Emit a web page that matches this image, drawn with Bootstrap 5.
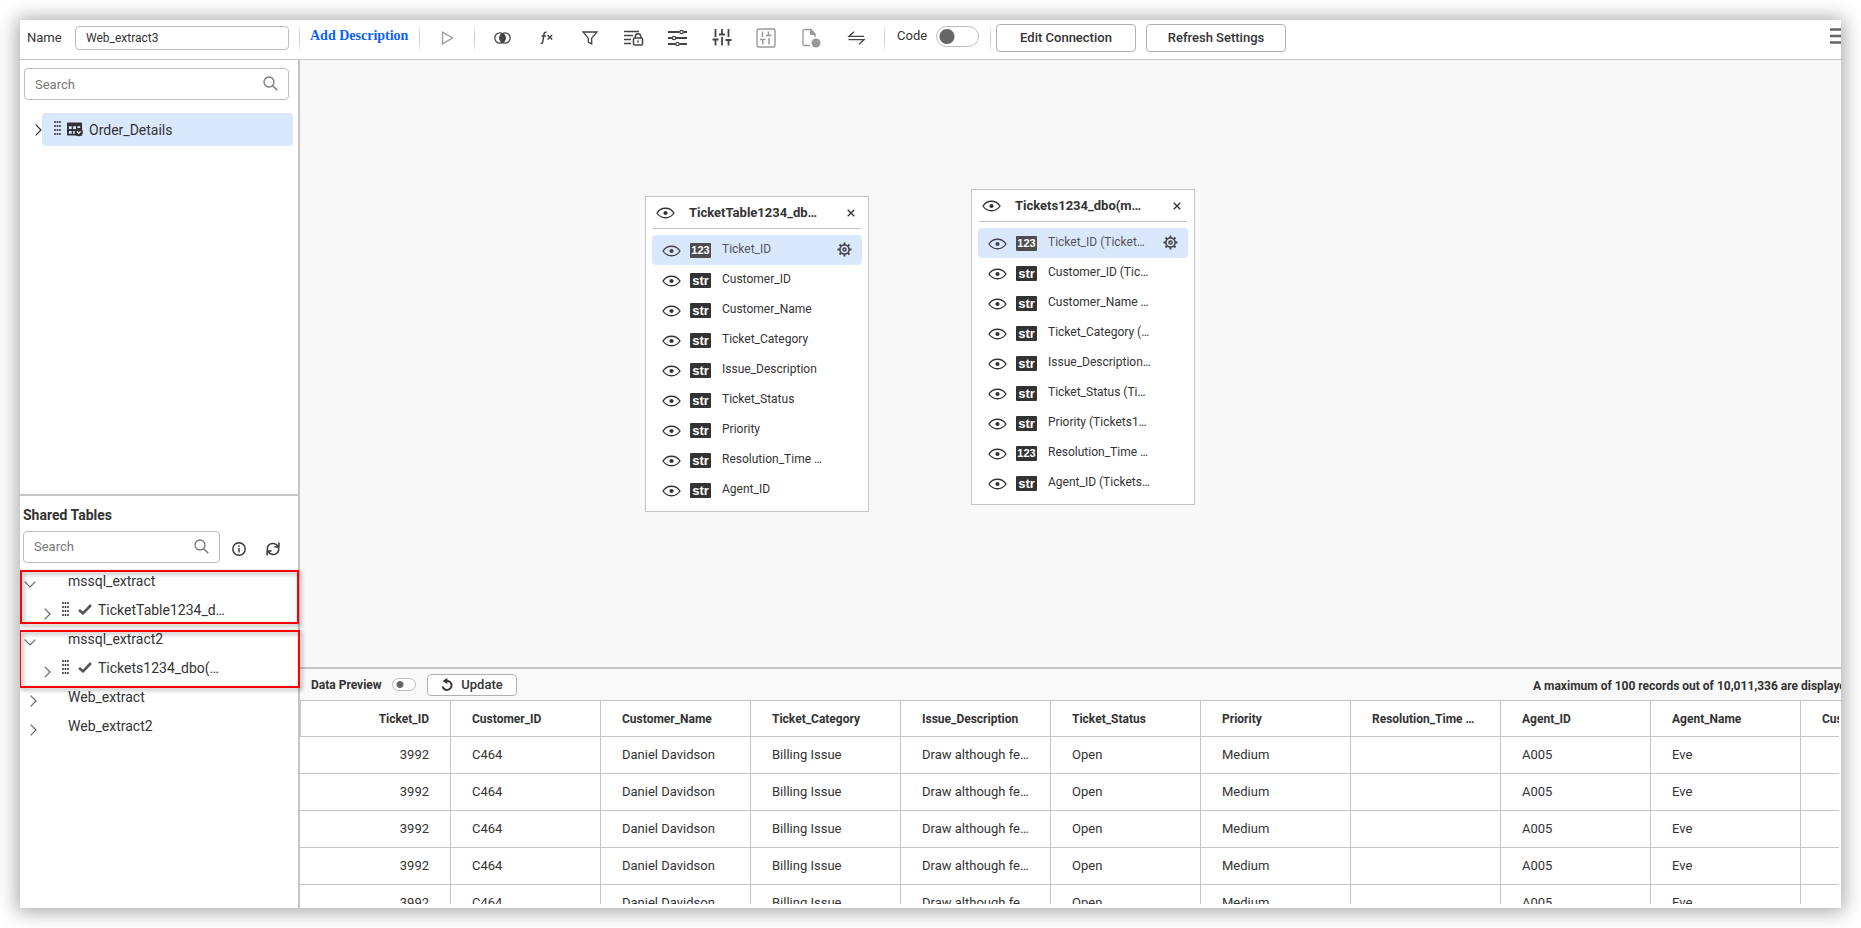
<!DOCTYPE html>
<html lang="en">
<head>
<meta charset="utf-8">
<meta name="viewport" content="width=device-width, initial-scale=1">
<title>Web_extract3</title>
<link href="https://cdn.jsdelivr.net/npm/bootstrap@5.3.0/dist/css/bootstrap.min.css" rel="stylesheet">
<style>
  :root { --line: #c5c5c5; --ink: #333; --pick: #dae8fe; }
  body { font-family: Roboto, "Liberation Sans", sans-serif; font-size: 13px; line-height: 20px; color: var(--ink); background: #fff; }
  .page { height: 100vh; padding: 20px; }
  .window { background: #fff; box-shadow: 0 1px 18px 3px rgba(0,0,0,.34); overflow: clip; }
  svg { display: block; fill: none; stroke: currentColor; flex: none; }
  button { color: inherit; }
  .plain { border: 0; background: none; padding: 0; }

  /* toolbar */
  .toolbar { height: 40px; border-bottom: 1px solid var(--line); padding-bottom: 4px; }
  .side-w { width: 280px; flex: none; }
  .box-input { border: 1px solid #bdbdbd; border-radius: 4px; font-size: 13px; line-height: 20px; color: var(--ink); background: #fff; }
  .name-label { width: 55px; padding-left: 7px; }
  .name-input { width: 214px; height: 24px; padding: 0 10px; font-size: 12px; }
  .rule { width: 1px; height: 28px; background: linear-gradient(transparent, #c0c0c0 50%, transparent); flex: none; }
  .desc-link { font-family: "Liberation Serif", serif; font-weight: 700; font-size: 14px; color: #0b63f6; text-decoration: none; width: 119px; padding: 0 0 4px 10px; white-space: nowrap; }
  .tool { width: 44px; height: 30px; display: flex; align-items: center; justify-content: center; color: #444; }
  .tool.off { color: #999; }
  .tool-wide { width: 54px; }
  .tools { margin: 0 8px 0 5px; }
  .code-label { width: 51px; padding: 0 0 3px 12px; }
  .btn-line { border: 1px solid #b0b0b0; border-radius: 4px; font-size: 13px; font-weight: 500; line-height: 20px; color: var(--ink); background: #fff; padding: 0; }
  .btn-top { width: 140px; height: 28px; }
  .actions { gap: 10px; margin-left: 5px; }
  .toggle { appearance: none; width: 43px; height: 21px; margin: 0; border: 1px solid #bdbdbd; border-radius: 11px; background: #fff radial-gradient(circle at 10px 50%, #666 7px, transparent 8px); }
  .toggle-code { margin: 0 11px 2px 0; }
  .toggle-sm { width: 24px; height: 13px; background: #fff radial-gradient(circle at 7px 50%, #666 3px, transparent 4px); }
  .menu { width: 11px; height: 30px; overflow: hidden; }

  /* side panel */
  .side { border-right: 2px solid var(--line); }
  .own-tables { flex: 435 1 0; }
  .shared { flex: 413 1 0; border-top: 2px solid var(--line); min-height: 0; }
  .finder { position: relative; }
  .finder input { width: 100%; height: 32px; padding: 0 10px; }
  .finder input::placeholder { color: #777; opacity: 1; }
  .finder svg { position: absolute; right: 11px; top: 8px; color: #777; }
  .own-row { padding: 13px 0 0 15px; }
  .picked { background: var(--pick); border-radius: 4px; height: 33px; width: 251px; font-size: 14px; padding-left: 12px; gap: 6px; }
  .panel-title { font-size: 14px; line-height: 20px; font-weight: 700; margin: 9px 0 6px 3px; }
  .shared-tools { padding-left: 3px; }
  .tree { font-size: 14px; padding-top: 4px; }
  .branch { height: 29px; display: flex; align-items: center; }
  .branch > .plain { padding-top: 7px; color: #666; }
  .branch > .closed { margin-left: 10px; }
  .branch-name { width: 230px; }
  .kid { gap: 6px; padding-left: 24px; }
  .kid > svg { margin-bottom: 2px; }
  .kid > .plain { margin-right: 5px; }
  .kid > .tick { margin-left: 3px; }
  .group { position: relative; }
  .frame { position: absolute; border: 2px solid #f00; filter: drop-shadow(2px 2px 2px rgba(0,0,0,.4)); pointer-events: none; z-index: 2; }
  .frame-a { inset: 3px -1px 1px 0; }
  .frame-b { inset: 5px -2px -5px -1px; }

  /* canvas */
  .canvas { flex: 1 1 0; min-height: 0; background: #f8f8f8; position: relative; }
  .node { position: absolute; width: 224px; height: 316px; background: #fff; border: 1px solid var(--line); padding: 0 6px; }
  .node-head { height: 32px; margin: 0 1px; border-bottom: 1px solid var(--line); display: flex; align-items: center; font-weight: 700; font-size: 13px; padding: 0 6px 0 3px; }
  .node-head > span { margin-left: 14px; }
  .node-list { margin: 6px 0 0; padding: 0; list-style: none; font-size: 12px; }
  .node-list li { height: 30px; display: flex; align-items: center; padding: 0 10px 2px; border-radius: 4px; }
  .node-list li > .plain, .kind { margin-top: 3px; }
  .node-list li > .gear { margin-top: 1px; }
  .node-list li.on { background: var(--pick); color: #555; }
  .on > .plain { color: #444; }
  .kind { width: 21px; height: 15px; margin-left: 9px; margin-right: 11px; background: #333; color: #fff; border-radius: 1px; font: 700 13px/15px "Liberation Sans", sans-serif; text-align: center; }
  .kind.num { font-size: 11px; }
  .on .kind { background: #4d4d4d; }

  /* preview */
  .preview { height: 241px; flex: none; border-top: 2px solid var(--line); }
  .preview-bar { height: 32px; background: #f9f9f9; border-bottom: 1px solid var(--line); font-size: 12px; }
  .live-label { width: 92px; padding-left: 11px; }
  .note { width: 308px; overflow: hidden; white-space: nowrap; padding-top: 2px; }
  .btn-up { width: 90px; height: 22px; margin-left: 11px; }
  .grid-wrap { overflow: hidden; margin: 0 2px 4px 0; min-height: 0; }
  .grid { table-layout: fixed; width: 1651px; border-collapse: separate; border-spacing: 0; }
  .grid th, .grid td { width: 150px; border-right: 1px solid var(--line); border-bottom: 1px solid var(--line); padding: 0 21px; white-space: nowrap; }
  .grid th { height: 36px; font-size: 12px; font-weight: 700; }
  .grid td { height: 37px; }
  .grid tr > :first-child { width: 151px; text-align: right; }
  .grid th:first-child { border-left: 1px solid var(--line); }
</style>
</head>
<body>
<svg width="0" height="0" class="position-absolute" aria-hidden="true">
  <symbol id="eye" viewBox="0 0 19 12"><path d="M1 6C5 -.4 14 -.4 18 6C14 12.400 5 12.400 1 6Z" stroke-width="1.400"/><circle cx="9.500" cy="6" r="2.100" fill="currentColor" stroke="none"/></symbol>
  <symbol id="find" viewBox="0 0 15 15"><circle cx="6" cy="6" r="5" stroke-width="1.300"/><path d="M9.700 9.700L14.300 14.300" stroke-width="1.500"/></symbol>
  <symbol id="right" viewBox="0 0 7 12"><path d="M.7 .7L6 6L.7 11.300" stroke-width="1.200"/></symbol>
  <symbol id="down" viewBox="0 0 12 7"><path d="M.7 .7L6 6L11.300 .7" stroke-width="1.200"/></symbol>
  <symbol id="grip" viewBox="0 0 7 14"><path d="M1 0V14M3.500 0V14M6 0V14" stroke-width="1.500" stroke-dasharray="2 2"/></symbol>
  <symbol id="tick" viewBox="0 0 14 11"><path d="M1 6L5 9.300L13 1" stroke-width="2.600" stroke="#555"/></symbol>
  <symbol id="cross" viewBox="0 0 8 8"><path d="M.7 .7L7.300 7.300M7.300 .7L.7 7.300" stroke-width="1.300"/></symbol>
  <symbol id="gear" viewBox="0 0 16 16"><circle cx="8" cy="8" r="4.900" stroke-width="1.700"/><circle cx="8" cy="8" r="1.700" stroke-width="1.600"/><path d="M8 .5V3M8 13V15.500M.5 8H3M13 8H15.500M2.700 2.700L4.400 4.400M11.600 11.600L13.300 13.300M2.700 13.300L4.400 11.600M11.600 4.400L13.300 2.700" stroke-width="2"/></symbol>
</svg>

<div class="page">
<div class="window h-100 d-flex flex-column">

  <header class="toolbar d-flex align-items-center flex-shrink-0">
    <div class="side-w d-flex align-items-center">
      <label for="name" class="name-label">Name</label>
      <input id="name" class="box-input name-input" type="text" value="Web_extract3">
      <span class="rule ms-auto"></span>
    </div>
    <a class="desc-link" href="#">Add Description</a>
    <span class="rule"></span>
    <button class="plain tool tool-wide off" type="button" aria-label="Run"><svg width="13" height="14" viewBox="0 0 13 14"><path d="M1.500 1.200V12.800L11.500 7Z" stroke-width="1.300"/></svg></button>
    <span class="rule"></span>
    <div class="tools d-flex">
      <button class="plain tool" type="button" aria-label="Join"><svg width="17" height="12" viewBox="0 0 17 12"><circle cx="6" cy="6" r="5.200" stroke-width="1.300"/><circle cx="11" cy="6" r="5.200" stroke-width="1.300"/><path d="M8.500 1.500a5.200 5.200 0 0 1 0 9a5.200 5.200 0 0 1 0-9Z" fill="currentColor"/></svg></button>
      <button class="plain tool" type="button" aria-label="Expression"><svg width="14" height="14" viewBox="1 0 14 14"><path d="M8.500 1.300C6.700 .8 6.200 1.600 5.900 3.500L4.900 10C4.600 12 4 12.700 2.700 12.200M3.500 5H8" stroke-width="1.500"/><path d="M9.600 4L14.200 8.500M14.200 4L9.600 8.500" stroke-width="1.400"/></svg></button>
      <button class="plain tool" type="button" aria-label="Filter"><svg width="16" height="14" viewBox="0 0 16 14"><path d="M1 1H15L9.700 7.200V12.800L6.300 11V7.200Z" stroke-width="1.300"/></svg></button>
      <button class="plain tool" type="button" aria-label="Lock rows"><svg width="20" height="16" viewBox="0 0 20 16"><path d="M0 1.500H15M0 5.500H9M0 9.500H7M0 13.500H7" stroke-width="1.500"/><rect x="9.500" y="8" width="9" height="7" rx="1" stroke-width="1.500"/><path d="M11.300 8V6.500a2.700 2.700 0 0 1 5.400 0V8M14 10.500V12.500" stroke-width="1.500"/></svg></button>
      <button class="plain tool" type="button" aria-label="Row settings"><svg width="20" height="16" viewBox="0 0 20 16"><path d="M0 2H11.500M15.500 2H19M0 8H4M8 8H19M0 14H7.500M11.500 14H19" stroke-width="1.800"/><g stroke-width="1.300"><circle cx="13.500" cy="2" r="1.700"/><circle cx="6" cy="8" r="1.700"/><circle cx="9.500" cy="14" r="1.700"/></g></svg></button>
      <button class="plain tool" type="button" aria-label="Column settings"><svg width="20" height="17" viewBox="0 0 20 17"><path d="M3.500 0V8M3.500 10.500V16.500M.5 10.500H6.500M10 0V5.500M7 5.500H13M10 8V16.500M16.500 0V8M13.500 11H19.500M16.500 11V16.500" stroke-width="1.800"/></svg></button>
      <button class="plain tool off" type="button" aria-label="Panel settings"><svg width="20" height="20" viewBox="0 0 20 20"><rect x="1" y="1" width="18" height="18" rx="1.500" stroke-width="1.400"/><path d="M6.500 3.500V9M4 11.500H9.500M6.700 11.500V16.500M12.500 3.500V7.500M10 7.500H15.500M13 10V16.500" stroke-width="1.500"/></svg></button>
      <button class="plain tool off" type="button" aria-label="File status"><svg width="22" height="20" viewBox="-2 0 22 20"><path d="M9 17.500H3.500a1.500 1.500 0 0 1-1.500-1.500V3a1.500 1.500 0 0 1 1.500-1.500H10L14 6V9" stroke-width="1.300"/><path d="M9.500 1.500V6.500H14.500" fill="currentColor"/><circle cx="15" cy="15" r="4.500" fill="currentColor" stroke="none"/></svg></button>
      <button class="plain tool" type="button" aria-label="Swap"><svg width="22" height="14" viewBox="1 0 22 14"><path d="M12 .8L7 5.300H22M6.500 8.700H22L17 13.200" stroke-width="1.300"/></svg></button>
    </div>
    <span class="rule"></span>
    <label for="code" class="code-label">Code</label>
    <input id="code" class="toggle toggle-code" type="checkbox" role="switch">
    <span class="rule"></span>
    <div class="actions d-flex">
      <button class="btn-line btn-top" type="button">Edit Connection</button>
      <button class="btn-line btn-top" type="button">Refresh Settings</button>
    </div>
    <button class="plain menu ms-auto mb-1" type="button" aria-label="Menu"><svg width="18" height="24" viewBox="0 0 18 24"><path d="M0 5.500H18M0 12H18M0 18.500H18" stroke-width="2.600" stroke="#666"/></svg></button>
  </header>

  <div class="d-flex flex-fill" style="min-height:0">
    <aside class="side side-w d-flex flex-column">
      <section class="own-tables">
        <div class="finder mt-2 ms-1" style="width:265px"><input class="box-input" type="text" placeholder="Search" aria-label="Search tables"><svg width="15" height="15"><use href="#find"/></svg></div>
        <div class="own-row d-flex align-items-center">
          <button class="plain" type="button" aria-label="Expand Order_Details"><svg width="7" height="12"><use href="#right"/></svg></button>
          <div class="picked d-flex align-items-center">
            <svg class="mb-1" width="7" height="14"><use href="#grip"/></svg>
            <svg width="16" height="15" viewBox="0 0 17 15"><rect x="0" y="0" width="16" height="14" rx="1" fill="#333" stroke="none"/><path d="M2 4H5V7H2ZM6.500 4H9.500V7H6.500ZM11 4H14V6H11ZM2 9H5V12H2ZM6.500 9H8.500V12H6.500Z" fill="#dae8fe" stroke="none"/><circle cx="12.500" cy="10.500" r="4.300" fill="#333" stroke="none"/><path d="M10.500 9.500L12.500 11.500L14.500 9.500" stroke="#fff" stroke-width="1.300"/></svg>
            <span>Order_Details</span>
          </div>
        </div>
      </section>

      <section class="shared">
        <h2 class="panel-title">Shared Tables</h2>
        <div class="shared-tools d-flex align-items-center">
          <div class="finder" style="width:197px"><input class="box-input" type="text" placeholder="Search" aria-label="Search shared tables"><svg width="15" height="15"><use href="#find"/></svg></div>
          <button class="plain ms-2 ps-1 pt-1" type="button" aria-label="About shared tables"><svg width="14" height="14" viewBox="0 0 14 14"><circle cx="7" cy="7" r="6.200" stroke-width="1.400"/><path d="M7 6V10.500M7 3.300V4.800" stroke-width="1.400"/></svg></button>
          <button class="plain ms-3 ps-1 pt-1" type="button" aria-label="Refresh"><svg width="14" height="14" viewBox="0 0 14 14"><path d="M1.500 8C.5 4 4 .8 7.500 1.500C9.500 1.800 11 2.800 12 4.500M12.500 6C13.500 10 10 13.200 6.500 12.500C4.500 12.200 3 11.200 2 9.500" stroke-width="1.500"/><path d="M12.900 .5V5H8.500M1.100 13.500V9H5.500" stroke-width="1.500"/></svg></button>
        </div>
        <div class="tree">
          <div class="group">
            <div class="branch"><button class="plain ms-1" type="button" aria-label="Collapse mssql_extract"><svg width="12" height="7"><use href="#down"/></svg></button><span class="branch-name ms-auto">mssql_extract</span></div>
            <div class="branch kid"><button class="plain" type="button" aria-label="Expand TicketTable1234"><svg width="7" height="12"><use href="#right"/></svg></button><svg width="7" height="14"><use href="#grip"/></svg><svg class="tick" width="14" height="11"><use href="#tick"/></svg><span>TicketTable1234_d…</span></div>
            <div class="frame frame-a"></div>
          </div>
          <div class="group">
            <div class="branch"><button class="plain ms-1" type="button" aria-label="Collapse mssql_extract2"><svg width="12" height="7"><use href="#down"/></svg></button><span class="branch-name ms-auto">mssql_extract2</span></div>
            <div class="branch kid"><button class="plain" type="button" aria-label="Expand Tickets1234"><svg width="7" height="12"><use href="#right"/></svg></button><svg width="7" height="14"><use href="#grip"/></svg><svg class="tick" width="14" height="11"><use href="#tick"/></svg><span>Tickets1234_dbo(…</span></div>
            <div class="frame frame-b"></div>
          </div>
          <div class="branch"><button class="plain closed" type="button" aria-label="Expand Web_extract"><svg width="7" height="12"><use href="#right"/></svg></button><span class="branch-name ms-auto">Web_extract</span></div>
          <div class="branch"><button class="plain closed" type="button" aria-label="Expand Web_extract2"><svg width="7" height="12"><use href="#right"/></svg></button><span class="branch-name ms-auto">Web_extract2</span></div>
        </div>
      </section>
    </aside>

    <main class="d-flex flex-column flex-fill" style="min-width:0">
      <div class="canvas">
        <section class="node" style="left:345px;top:136px">
          <div class="node-head"><button class="plain" type="button" aria-label="Toggle table"><svg width="19" height="12"><use href="#eye"/></svg></button><span>TicketTable1234_db…</span><button class="plain ms-auto" type="button" aria-label="Remove table"><svg width="8" height="8"><use href="#cross"/></svg></button></div>
          <ul class="node-list">
            <li class="on"><button class="plain" type="button" aria-label="Toggle"><svg width="19" height="12"><use href="#eye"/></svg></button><span class="kind num">123</span><span>Ticket_ID</span><button class="plain gear ms-auto" type="button" aria-label="Settings"><svg width="15" height="15"><use href="#gear"/></svg></button></li>
            <li><button class="plain" type="button" aria-label="Toggle"><svg width="19" height="12"><use href="#eye"/></svg></button><span class="kind">str</span><span>Customer_ID</span></li>
            <li><button class="plain" type="button" aria-label="Toggle"><svg width="19" height="12"><use href="#eye"/></svg></button><span class="kind">str</span><span>Customer_Name</span></li>
            <li><button class="plain" type="button" aria-label="Toggle"><svg width="19" height="12"><use href="#eye"/></svg></button><span class="kind">str</span><span>Ticket_Category</span></li>
            <li><button class="plain" type="button" aria-label="Toggle"><svg width="19" height="12"><use href="#eye"/></svg></button><span class="kind">str</span><span>Issue_Description</span></li>
            <li><button class="plain" type="button" aria-label="Toggle"><svg width="19" height="12"><use href="#eye"/></svg></button><span class="kind">str</span><span>Ticket_Status</span></li>
            <li><button class="plain" type="button" aria-label="Toggle"><svg width="19" height="12"><use href="#eye"/></svg></button><span class="kind">str</span><span>Priority</span></li>
            <li><button class="plain" type="button" aria-label="Toggle"><svg width="19" height="12"><use href="#eye"/></svg></button><span class="kind">str</span><span>Resolution_Time …</span></li>
            <li><button class="plain" type="button" aria-label="Toggle"><svg width="19" height="12"><use href="#eye"/></svg></button><span class="kind">str</span><span>Agent_ID</span></li>
          </ul>
        </section>
        <section class="node" style="left:671px;top:129px">
          <div class="node-head"><button class="plain" type="button" aria-label="Toggle table"><svg width="19" height="12"><use href="#eye"/></svg></button><span>Tickets1234_dbo(m…</span><button class="plain ms-auto" type="button" aria-label="Remove table"><svg width="8" height="8"><use href="#cross"/></svg></button></div>
          <ul class="node-list">
            <li class="on"><button class="plain" type="button" aria-label="Toggle"><svg width="19" height="12"><use href="#eye"/></svg></button><span class="kind num">123</span><span>Ticket_ID (Ticket…</span><button class="plain gear ms-auto" type="button" aria-label="Settings"><svg width="15" height="15"><use href="#gear"/></svg></button></li>
            <li><button class="plain" type="button" aria-label="Toggle"><svg width="19" height="12"><use href="#eye"/></svg></button><span class="kind">str</span><span>Customer_ID (Tic…</span></li>
            <li><button class="plain" type="button" aria-label="Toggle"><svg width="19" height="12"><use href="#eye"/></svg></button><span class="kind">str</span><span>Customer_Name …</span></li>
            <li><button class="plain" type="button" aria-label="Toggle"><svg width="19" height="12"><use href="#eye"/></svg></button><span class="kind">str</span><span>Ticket_Category (…</span></li>
            <li><button class="plain" type="button" aria-label="Toggle"><svg width="19" height="12"><use href="#eye"/></svg></button><span class="kind">str</span><span>Issue_Description…</span></li>
            <li><button class="plain" type="button" aria-label="Toggle"><svg width="19" height="12"><use href="#eye"/></svg></button><span class="kind">str</span><span>Ticket_Status (Ti…</span></li>
            <li><button class="plain" type="button" aria-label="Toggle"><svg width="19" height="12"><use href="#eye"/></svg></button><span class="kind">str</span><span>Priority (Tickets1…</span></li>
            <li><button class="plain" type="button" aria-label="Toggle"><svg width="19" height="12"><use href="#eye"/></svg></button><span class="kind num">123</span><span>Resolution_Time …</span></li>
            <li><button class="plain" type="button" aria-label="Toggle"><svg width="19" height="12"><use href="#eye"/></svg></button><span class="kind">str</span><span>Agent_ID (Tickets…</span></li>
          </ul>
        </section>
      </div>

      <section class="preview d-flex flex-column">
        <div class="preview-bar d-flex align-items-center flex-shrink-0">
          <label for="live" class="live-label fw-bold">Data Preview</label>
          <input id="live" class="toggle toggle-sm" type="checkbox" role="switch">
          <button class="btn-line btn-up d-flex align-items-center justify-content-center gap-2" type="button"><svg width="12" height="13" viewBox="0 0 12 13"><path d="M1.500 8.500A4.600 4.600 0 1 0 3.800 3.300" stroke-width="1.900"/><path d="M6.300 0V6L1.500 3Z" fill="currentColor" stroke="none"/></svg><span>Update</span></button>
          <span class="note fw-bold ms-auto">A maximum of 100 records out of 10,011,336 are displayed</span>
        </div>
        <div class="grid-wrap flex-fill">
          <table class="grid">
            <thead><tr><th>Ticket_ID</th><th>Customer_ID</th><th>Customer_Name</th><th>Ticket_Category</th><th>Issue_Description</th><th>Ticket_Status</th><th>Priority</th><th>Resolution_Time …</th><th>Agent_ID</th><th>Agent_Name</th><th>Customer_Rating</th></tr></thead>
            <tbody>
              <tr><td>3992</td><td>C464</td><td>Daniel Davidson</td><td>Billing Issue</td><td>Draw although fe…</td><td>Open</td><td>Medium</td><td></td><td>A005</td><td>Eve</td><td></td></tr>
              <tr><td>3992</td><td>C464</td><td>Daniel Davidson</td><td>Billing Issue</td><td>Draw although fe…</td><td>Open</td><td>Medium</td><td></td><td>A005</td><td>Eve</td><td></td></tr>
              <tr><td>3992</td><td>C464</td><td>Daniel Davidson</td><td>Billing Issue</td><td>Draw although fe…</td><td>Open</td><td>Medium</td><td></td><td>A005</td><td>Eve</td><td></td></tr>
              <tr><td>3992</td><td>C464</td><td>Daniel Davidson</td><td>Billing Issue</td><td>Draw although fe…</td><td>Open</td><td>Medium</td><td></td><td>A005</td><td>Eve</td><td></td></tr>
              <tr><td>3992</td><td>C464</td><td>Daniel Davidson</td><td>Billing Issue</td><td>Draw although fe…</td><td>Open</td><td>Medium</td><td></td><td>A005</td><td>Eve</td><td></td></tr>
            </tbody>
          </table>
        </div>
      </section>
    </main>
  </div>
</div>
</div>
<script src="https://cdn.jsdelivr.net/npm/bootstrap@5.3.0/dist/js/bootstrap.bundle.min.js"></script>
</body>
</html>
